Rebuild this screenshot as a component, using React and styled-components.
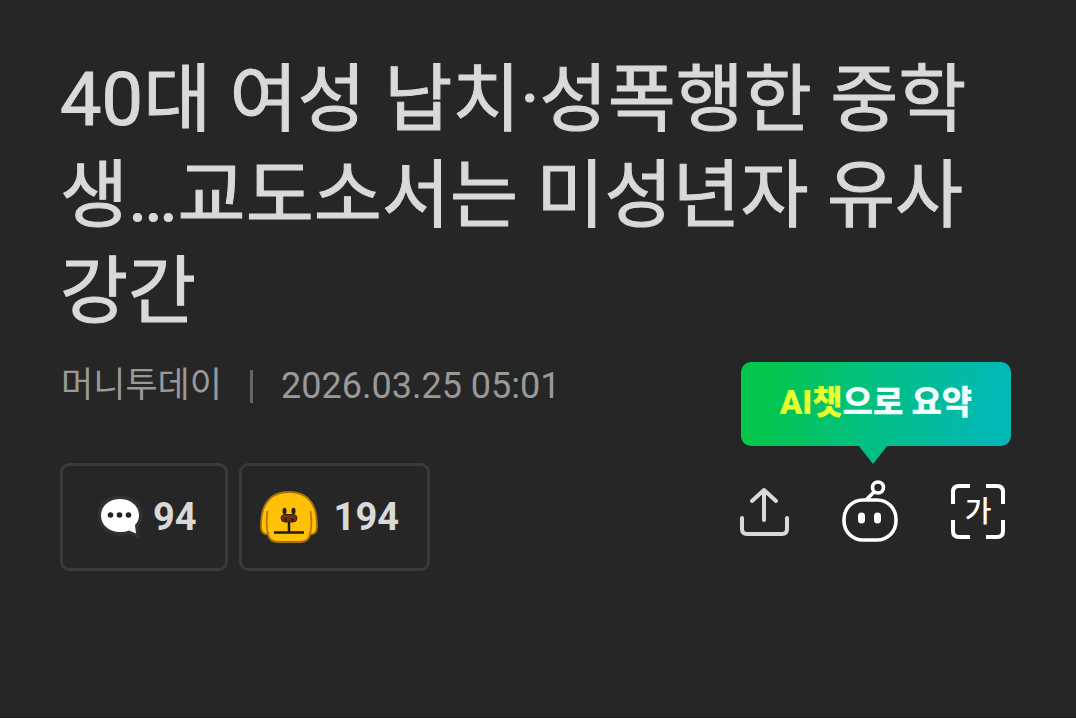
import React from 'react';
import styled, { createGlobalStyle } from 'styled-components';

const GlobalStyle = createGlobalStyle`
  * {
    box-sizing: border-box;
  }

  body {
    margin: 0;
    background: #262626;
    font-family: 'Roboto', 'Noto Sans CJK KR', sans-serif;
  }
`;

// Styled components
const Page = styled.main`
  display: flex;
  flex-direction: column;
  min-height: 100vh;
  border-bottom: 1px solid #231a1f;
  background: #262626;
`;

const ArticleHeader = styled.header`
  padding: 52px 71px 52px 60px;
`;

const Title = styled.h1`
  margin: 0;
  color: #d9d9d9;
  font-size: 74px;
  font-weight: 400;
  line-height: 96px;
  word-break: break-all;
  -webkit-text-stroke: 1px #d9d9d9;
`;

const Meta = styled.div`
  display: flex;
  align-items: center;
  margin-top: 20px;
  padding-left: 1px;
  color: #999;
  font-size: 36px;
  line-height: 52px;
`;

const Press = styled.span`
  font-size: 35px;
`;

const Divider = styled.span`
  width: 3px;
  height: 33px;
  margin: 0 28px;
  background: #666;
`;

const Toolbar = styled.div`
  display: flex;
  align-items: flex-start;
  justify-content: space-between;
  margin-top: 51px;
`;

const Group = styled.div`
  display: flex;
  gap: ${(props) => props.$gap};
  padding-top: ${(props) => props.$top || '0'};
`;

const CountButton = styled.button`
  display: flex;
  align-items: center;
  gap: ${(props) => props.$gap};
  height: 108px;
  padding: 0 28px 0 ${(props) => props.$left};
  border: 3px solid #3a3a3a;
  border-radius: 9px;
  background: transparent;
  color: #d9d9d9;
  font-family: inherit;
  font-size: 38px;
  font-weight: 700;
  cursor: pointer;
`;

const IconButton = styled.button`
  position: relative;
  display: flex;
  padding: 0;
  border: 0;
  background: transparent;
  color: ${(props) => props.$color || '#fff'};
  font-family: inherit;
  cursor: pointer;
`;

const Tooltip = styled.span`
  position: absolute;
  bottom: 98px;
  left: 50%;
  width: 270px;
  margin-left: -129px;
  border-radius: 10px;
  background: linear-gradient(100deg, #03c64d 10%, #03bf84 50%, #02b8b5 92%);
  color: #effffb;
  font-size: 33px;
  font-weight: 900;
  line-height: 82px;
  padding-bottom: 2px;
  text-align: center;
  white-space: nowrap;
`;

const TooltipTail = styled.svg`
  position: absolute;
  top: 83px;
  left: 117px;
`;

const Highlight = styled.em`
  color: #e6ff2e;
  font-style: normal;
`;

const CommentIcon = () => (
  <svg width="46" height="46" viewBox="0 0 46 46" aria-hidden="true">
    <path
      d="M23 5C12 5 4 12 4 21.500S12 38 23 38q5 0 9-1.500L39 39.500 38 31q4-4 4-9.500C42 12 34 5 23 5Z"
      fill="#fff"
      stroke="#313131"
      strokeWidth="7"
      paintOrder="stroke"
    />
    <circle cx="13.500" cy="21" r="2.800" fill="#222" />
    <circle cx="22.500" cy="21" r="2.800" fill="#222" />
    <circle cx="31.500" cy="21" r="2.800" fill="#222" />
  </svg>
);

const DogIcon = () => (
  <svg width="58" height="52" viewBox="0 0 58 52" aria-hidden="true">
    <path
      d="M8 43.500C3.500 43.500 1 41 1 36C1 30 1.500 24 3 19C7 7 16 1 29 1S51 7 55 19C56.500 24 57 30 57 36C57 41 54.500 43.500 50 43.500C49 48.500 45 51 40 51H18C13 51 9 48.500 8 43.500Z"
      fill="#ffc107"
      stroke="#a8700f"
      strokeWidth="1.800"
    />
    <path d="M7.500 20Q6 30 7 37Q7 41 8.500 43.500M50.500 20Q52 30 51 37Q51 41 49.500 43.500" fill="none" stroke="#b97a0c" strokeWidth="1.800" />
    <ellipse cx="24.500" cy="20" rx="2" ry="3.200" fill="#221c10" />
    <ellipse cx="33.500" cy="20" rx="2" ry="3.200" fill="#221c10" />
    <path
      d="M25 23.500H33Q37 23.500 37 27Q37 31 33 31H25Q21 31 21 27Q21 23.500 25 23.500Z"
      fill="#6b320d"
      stroke="#351d0b"
    />
    <path d="M25.500 27.500V30M32.500 27.500V30" stroke="#24170b" strokeWidth="2" />
    <path d="M29 31V41.500M14 41.500H44" fill="none" stroke="#231a10" strokeWidth="2.500" />
  </svg>
);

const ShareIcon = () => (
  <svg
    width="50"
    height="64"
    viewBox="0 0 50 64"
    fill="none"
    stroke="currentColor"
    strokeWidth="4"
    strokeLinecap="round"
    strokeLinejoin="round"
    aria-hidden="true"
  >
    <path d="M25 40V10M13 21L25 10L37 21M3 38V49Q3 54 8 54H43Q48 54 48 49V38" />
  </svg>
);

const RobotIcon = () => (
  <svg width="56" height="64" viewBox="0 0 56 64" fill="none" stroke="currentColor" strokeWidth="3.600" aria-hidden="true">
    <rect x="2" y="20" width="52" height="40" rx="19" />
    <path d="M24 20L32 12" />
    <circle cx="36" cy="7.500" r="5.500" />
    <path d="M19.500 36V40M35.500 36V40" strokeWidth="7" strokeLinecap="round" />
  </svg>
);

const FontSizeIcon = () => (
  <svg width="54" height="64" viewBox="0 0 54 64" aria-hidden="true">
    <path
      d="M2 24V12Q2 6 8 6H19M35 6H46Q52 6 52 12V24M52 40V51Q52 57 46 57H35M19 57H8Q2 57 2 51V40"
      fill="none"
      stroke="currentColor"
      strokeWidth="4"
    />
    <text
      x="27"
      y="42"
      textAnchor="middle"
      fill="currentColor"
      fontFamily="Noto Sans CJK KR, sans-serif"
      fontSize="29"
      fontWeight="500"
    >
      가
    </text>
  </svg>
);

const App = () => (
  <>
    <GlobalStyle />
    <Page>
      <ArticleHeader>
        <Title>40대 여성 납치·성폭행한 중학생…교도소서는 미성년자 유사강간</Title>

        <Meta>
          <Press>머니투데이</Press>
          <Divider />
          <time dateTime="2026-03-25T05:01">2026.03.25 05:01</time>
        </Meta>

        <Toolbar>
          <Group $gap="11px">
            <CountButton type="button" $left="34px" $gap="10px" aria-label="댓글 94">
              <CommentIcon />
              94
            </CountButton>
            <CountButton type="button" $left="18px" $gap="16px" aria-label="공감 194">
              <DogIcon />
              194
            </CountButton>
          </Group>

          <Group $gap="53px" $top="17px">
            <IconButton type="button" $color="#d9d9d9" aria-label="공유">
              <ShareIcon />
            </IconButton>
            <IconButton type="button">
              <Tooltip>
                <Highlight>AI챗</Highlight>으로 요약
                <TooltipTail width="30" height="19" viewBox="0 0 30 19" aria-hidden="true">
                  <path d="M0 0H30L15 19Z" fill="#03be82" />
                </TooltipTail>
              </Tooltip>
              <RobotIcon />
            </IconButton>
            <IconButton type="button" aria-label="글자 크기">
              <FontSizeIcon />
            </IconButton>
          </Group>
        </Toolbar>
      </ArticleHeader>
    </Page>
  </>
);

export default App;
